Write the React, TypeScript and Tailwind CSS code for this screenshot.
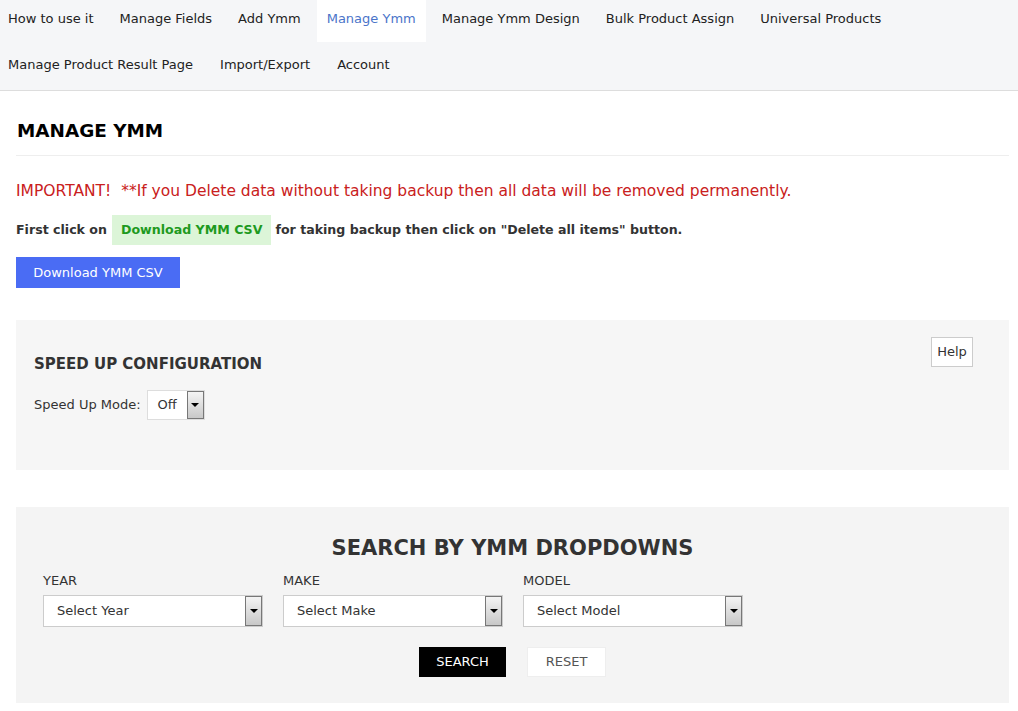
const tabs1 = [
  "How to use it",
  "Manage Fields",
  "Add Ymm",
  "Manage Ymm",
  "Manage Ymm Design",
  "Bulk Product Assign",
  "Universal Products",
];
const tabs2 = ["Manage Product Result Page", "Import/Export", "Account"];

function NavItem({ label }: { label: string }) {
  const active = label === "Manage Ymm";
  return (
    <a
      className={`block px-[10px] pt-[10px] pb-[14px] text-[13px] leading-[18px] ${
        active ? "bg-white text-[#4a74c9]" : "text-[#222]"
      }`}
    >
      {label}
    </a>
  );
}

function Arrow() {
  return (
    <div className="flex h-full w-[17px] items-center justify-center border border-[#777] bg-gradient-to-b from-[#f4f4f4] to-[#c8c8c8]">
      <div className="h-0 w-0 border-x-[4px] border-t-[4px] border-x-transparent border-t-black" />
    </div>
  );
}

function YmmSelect({ label, placeholder }: { label: string; placeholder: string }) {
  return (
    <div className="w-[220px]">
      <div className="mb-[6px] text-[13px] leading-[16px] text-[#333]">{label}</div>
      <div className="flex h-[32px] items-center justify-between border border-[#ccc] bg-white">
        <span className="pl-[13px] text-[13px] text-[#333]">{placeholder}</span>
        <div className="h-[30px]">
          <Arrow />
        </div>
      </div>
    </div>
  );
}

export default function App() {
  return (
    <div className="min-h-screen bg-white font-['DejaVu_Sans',Verdana,sans-serif] text-[#333]">
      {/* Top nav */}
      <nav className="border-b border-[#ddd] bg-[#f5f6f8] pb-[2px]">
        <div className="-ml-[2px] flex gap-[6px]">
          {tabs1.map((t) => (
            <NavItem key={t} label={t} />
          ))}
        </div>
        <div className="-ml-[2px] mt-[4px] flex gap-[7px]">
          {tabs2.map((t) => (
            <NavItem key={t} label={t} />
          ))}
        </div>
      </nav>

      <main className="pl-[16px] pr-[9px]">
        <h1 className="pt-[28px] pb-[12px] pl-[1px] text-[18.4px] font-bold leading-[24px] text-black">
          MANAGE YMM
        </h1>
        <hr className="border-[#eee]" />

        <p className="mt-[25px] text-[15.5px] leading-[20px] text-[#c92020]">
          IMPORTANT!{"\u00a0"} **If you Delete data without taking backup then all data will be removed permanently.
        </p>

        <div className="mt-[14px] flex items-center text-[12.6px] font-bold text-[#333]">
          <span>First click on</span>
          <span className="ml-[5px] mr-[4px] bg-[#dcf5d8] px-[9px] leading-[30px] text-[#1e9a1e]">
            Download YMM CSV
          </span>
          <span>for taking backup then click on "Delete all items" button.</span>
        </div>

        <button className="mt-[12px] h-[31px] w-[164px] bg-[#4a6cf4] text-[13px] text-white">
          Download YMM CSV
        </button>

        {/* Speed up */}
        <section className="mt-[32px] flex h-[150px] justify-between bg-[#f6f6f6] pr-[36px] pl-[18px]">
          <div className="pt-[34px]">
            <h2 className="text-[15px] font-bold leading-[20px] text-[#333]">SPEED UP CONFIGURATION</h2>
            <div className="mt-[16px] flex items-center text-[13px]">
              <span>Speed Up Mode:</span>
              <div className="ml-[6px] flex h-[30px] w-[58px] items-center justify-between border border-[#ddd] bg-white">
                <span className="pl-[10px]">Off</span>
                <div className="h-[28px]">
                  <Arrow />
                </div>
              </div>
            </div>
          </div>
          <div className="pt-[17px]">
            <button className="h-[30px] w-[42px] border border-[#ccc] bg-white text-[13px] text-[#333]">Help</button>
          </div>
        </section>

        {/* Search */}
        <section className="mt-[37px] h-[196px] bg-[#f4f4f4] pt-[28px]">
          <h2 className="text-center text-[21px] font-bold leading-[26px] text-[#333]">
            SEARCH BY YMM DROPDOWNS
          </h2>
          <div className="mt-[12px] flex gap-[20px] pl-[27px]">
            <YmmSelect label="YEAR" placeholder="Select Year" />
            <YmmSelect label="MAKE" placeholder="Select Make" />
            <YmmSelect label="MODEL" placeholder="Select Model" />
          </div>
          <div className="mt-[20px] flex justify-center gap-[21px]">
            <button className="h-[30px] w-[87px] bg-black text-[13px] text-white">SEARCH</button>
            <button className="h-[30px] w-[79px] border border-[#eee] bg-white text-[13px] text-[#555]">
              RESET
            </button>
          </div>
        </section>
      </main>
    </div>
  );
}
